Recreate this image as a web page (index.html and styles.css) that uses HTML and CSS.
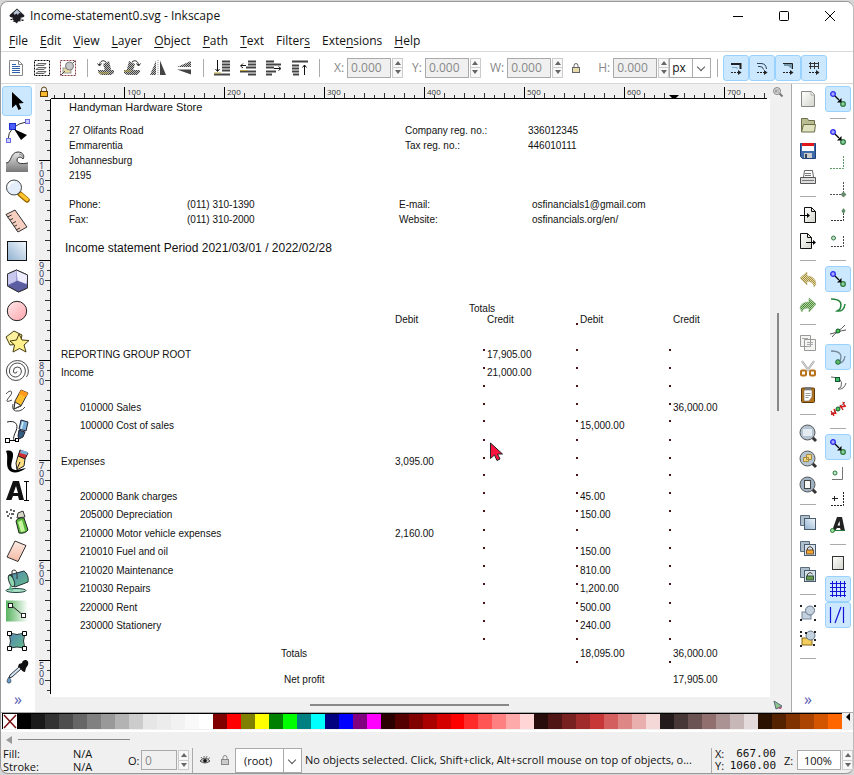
FILE: index.html
```html
<!DOCTYPE html>
<html lang="en">
<head>
<meta charset="utf-8">
<title>Income-statement0.svg - Inkscape</title>
<meta name="viewport" content="width=device-width, initial-scale=1">
<link rel="stylesheet" href="styles.css">
</head>
<body>
<svg class="defs" aria-hidden="true">
  <defs>
    <linearGradient id="gBlue" x1="0" y1="1" x2="1" y2="0"><stop offset="0" stop-color="#8fb0d0"/><stop offset="1" stop-color="#f4f9fd"/></linearGradient>
    <linearGradient id="gPink" x1="0" y1="0" x2="1" y2="1"><stop offset="0" stop-color="#ffe9ea"/><stop offset="1" stop-color="#ffa4ac"/></linearGradient>
    <linearGradient id="gGreen" x1="0" y1="0" x2="1" y2="0"><stop offset="0" stop-color="#58b35f"/><stop offset="1" stop-color="#ffffff"/></linearGradient>
    <linearGradient id="gMesh" x1="0" y1="0" x2="1" y2="1"><stop offset="0" stop-color="#5585b5"/><stop offset="1" stop-color="#63bd88"/></linearGradient>
    <linearGradient id="gPaper" x1="0" y1="0" x2="1" y2="1"><stop offset="0" stop-color="#ffffff"/><stop offset="1" stop-color="#d4d4cc"/></linearGradient>
    <linearGradient id="gGrey" x1="0" y1="0" x2="0" y2="1"><stop offset="0" stop-color="#e8e8e8"/><stop offset="1" stop-color="#777"/></linearGradient>
    <linearGradient id="gEraser" x1="0" y1="0" x2="0" y2="1"><stop offset="0" stop-color="#fdebe4"/><stop offset="1" stop-color="#f4b9a4"/></linearGradient>
    <pattern id="pDots" width="2" height="2" patternUnits="userSpaceOnUse"><rect width="2" height="2" fill="#bbb"/><path d="M0 0h1v1H0zM1 1h1v1H1z" fill="#444"/></pattern>
    <pattern id="pGold" width="2" height="2" patternUnits="userSpaceOnUse"><rect width="2" height="2" fill="#e8dca4"/><path d="M0 0h1v1H0zM1 1h1v1H1z" fill="#a08c40"/></pattern>
    <pattern id="pGreen" width="2" height="2" patternUnits="userSpaceOnUse"><rect width="2" height="2" fill="#b4d69c"/><path d="M0 0h1v1H0zM1 1h1v1H1z" fill="#4c8a42"/></pattern>
  </defs>

  <symbol id="i-logo" viewBox="0 0 16 16"><path d="M8 0.500l7 6.500c1 1 0 2-1 2.300l-3 .7 2 1-2 .7 1 1.500-3 .3-1 2-2-1.500-2.500-.8 1.500-1-2.500-1.200 2-1L1.500 9C.5 8.600 0 7.700 1 6.800z" fill="#1c1c22"/><path d="M8 1.500l4 4-2-.5-1 2-1.500-1.500L5.500 7 5 5.200 4 5.500z" fill="#b9c6d6"/><path d="M12.500 11.500h2v1.500h-2zM1.500 11h1.500v1H1.500z" fill="#1c1c22"/></symbol>

  <symbol id="i-doclines" viewBox="0 0 24 24"><path d="M5.500 4.500h9l4 4v11h-13z" fill="#fff" stroke="#888"/><path d="M14.500 4.500v4h4" fill="none" stroke="#888"/><path d="M8 8.500h4M8 10.500h8M8 12.500h8M8 14.500h8M8 16.500h8" stroke="#2f62ad"/></symbol>
  <symbol id="i-selall" viewBox="0 0 24 24"><rect x="4.500" y="4.500" width="15" height="15" fill="none" stroke="#000" stroke-dasharray="2 1"/><path d="M8 7.500h8l-2 2H6zM8 11.500h8l-2 2H6zM8 15.500h8l-2 2H6z" fill="#ddd" stroke="#666"/></symbol>
  <symbol id="i-desel" viewBox="0 0 24 24"><rect x="4.500" y="4.500" width="15" height="15" fill="none" stroke="#8c3a44" stroke-dasharray="2 1"/><rect x="7" y="12" width="8" height="5" fill="#e8dca4" stroke="#999"/><circle cx="13.500" cy="10" r="4" fill="#c8c8c8" stroke="#777"/><path d="M5 19l4-4M17 7l2-2" stroke="#555"/></symbol>
  <symbol id="i-rotl" viewBox="0 0 24 24"><path d="M9 8l6-3 3 12-6 1z" fill="url(#pDots)"/><path d="M4 14h16v3l-3 2H7l-3-3z" fill="url(#pDots)"/><path d="M5 17h10" stroke="#b9a53d"/><path d="M12 6C9 3.500 6 5 5.500 9M3.500 7.500l2 2.500 2-2.500" fill="none" stroke="#222"/></symbol>
  <symbol id="i-rotr" viewBox="0 0 24 24"><path d="M15 8L9 5 6 17l6 1z" fill="url(#pDots)"/><path d="M4 14h16v2l-3 3H7l-3-2z" fill="url(#pDots)"/><path d="M4 15h7" stroke="#b9a53d"/><path d="M12 6c3-2.500 6-1 6.500 3M16.500 7.500l2 2.500 2-2.500" fill="none" stroke="#222"/></symbol>
  <symbol id="i-fliph" viewBox="0 0 24 24"><path d="M10 4.500V19H4z" fill="url(#pDots)"/><path d="M14 4.500V19h6z" fill="#444" /><path d="M12 4v16" stroke="#999" stroke-dasharray="1 1"/></symbol>
  <symbol id="i-flipv" viewBox="0 0 24 24"><path d="M19 5v6H5z" fill="url(#pDots)"/><path d="M19 18.500v-5H5z" fill="#444"/></symbol>
  <symbol id="i-bottom" viewBox="0 0 24 24"><path d="M12 5.500h8M12 8.500h8M12 11.500h8M12 14.500h8M4 18.500h16" stroke="#444" stroke-width="2"/><path d="M4 17h7" stroke="#b9a53d"/><path d="M7.500 4v11M5.500 13l2 2.500 2-2.500" fill="none" stroke="#111"/></symbol>
  <symbol id="i-lower" viewBox="0 0 24 24"><path d="M12 5.500h8M12 8.500h8M10 11.500h10M4 15.500h16M12 18.500h8" stroke="#444" stroke-width="2"/><path d="M4 14.500h7" stroke="#b9a53d"/><path d="M10 9.500H5M7 7.500L4.500 10 7 12" fill="none" stroke="#111"/></symbol>
  <symbol id="i-raise" viewBox="0 0 24 24"><path d="M4 5.500h8M4 8.500h15M4 11.500h8M4 15.500h10M4 18.500h6" stroke="#444" stroke-width="2"/><path d="M12 12.500h6M16.500 10.500l2.500 2-2.500 2" fill="none" stroke="#111"/></symbol>
  <symbol id="i-top" viewBox="0 0 24 24"><path d="M4 5.500h16M4 9.500h7M4 12.500h7M4 15.500h7M5 18.500h6" stroke="#444" stroke-width="2"/><path d="M16.500 19V9M14.500 11.500l2-2.500 2 2.500" fill="none" stroke="#111"/></symbol>
  <symbol id="i-lock" viewBox="0 0 12 12"><path d="M4 5V3.500a2 2 0 0 1 4 0V5" fill="none" stroke="#666"/><rect x="2.500" y="5.500" width="7" height="5" fill="#e6dcae" stroke="#666"/></symbol>
  <symbol id="i-lockc" viewBox="0 0 12 12"><path d="M3.500 6V3.500a2.500 2.500 0 0 1 5 0V6" fill="none" stroke="#5a4410"/><rect x="2.500" y="5.500" width="7" height="5" fill="#f5b92e" stroke="#5a3c0a"/></symbol>
  <symbol id="i-lockg" viewBox="0 0 12 12"><path d="M4 6V3.500a2 2 0 0 1 4 0V5" fill="none" stroke="#888"/><rect x="2.500" y="5.500" width="7" height="5" fill="#ccc" stroke="#888"/></symbol>
  <symbol id="i-eye" viewBox="0 0 12 12"><path d="M1 7q5-6 10 0-5 4-10 0z" fill="#bbb" stroke="#555"/><path d="M2 3l1 1.500M5 2v1.500M8 2l-.5 1.500M10.500 3.500L9.500 5" stroke="#666"/><circle cx="6" cy="6.800" r="1.800" fill="#111"/></symbol>
  <symbol id="i-t1" viewBox="0 0 24 24"><path d="M7 8h9.500v5" fill="none" stroke="#222" stroke-width="2"/><path d="M8 11.500h5V13" fill="none" stroke="#8ab"/><path d="M7 16.500h7" stroke="#222" stroke-dasharray="2 1"/><path d="M14 14l3.500 2.500L14 19z" fill="#222"/></symbol>
  <symbol id="i-t2" viewBox="0 0 24 24"><path d="M7 7.500h4q5 0 5.500 5.500M8 10.500h2q3 0 3.500 3" fill="none" stroke="#345"/><path d="M7 16.500h7" stroke="#222" stroke-dasharray="2 1"/><path d="M14 14l3.500 2.500L14 19z" fill="#222"/></symbol>
  <symbol id="i-t3" viewBox="0 0 24 24"><path d="M7 7.500h9.500V13" fill="none" stroke="#222"/><path d="M8 8h8v5l-4-3H8z" fill="#79a"/><path d="M7 16.500h7" stroke="#222" stroke-dasharray="2 1"/><path d="M14 14l3.500 2.500L14 19z" fill="#222"/></symbol>
  <symbol id="i-t4" viewBox="0 0 24 24"><path d="M7 7.500h10M7 10.500h10M8.500 6v7M12.500 6v7M16.500 6v7" stroke="#333"/><path d="M7 16.500h7" stroke="#222" stroke-dasharray="2 1"/><path d="M14 14l3.500 2.500L14 19z" fill="#222"/></symbol>

  <symbol id="i-select" viewBox="0 0 26 26"><path d="M8 4v16l4-3.500 2.500 5.500 2.800-1.300-2.500-5.200 5-.5z" fill="#000"/></symbol>
  <symbol id="i-node" viewBox="0 0 26 26"><path d="M4 22Q4 7 24 3.500" fill="none" stroke="#333"/><rect x="5.500" y="5.500" width="6" height="6" fill="#4c5dfc" stroke="#1c2ed0"/><rect x="2.500" y="20.500" width="4" height="4" fill="#c9cdfc" stroke="#6a6ce0"/><rect x="21.500" y="1.500" width="4" height="4" fill="#c9cdfc" stroke="#6a6ce0"/><path d="M10 11l13 6-6 5z" fill="#000"/></symbol>
  <symbol id="i-tweak" viewBox="0 0 26 26"><path d="M2 15c6 0 4-11 12-11 5 0 7 4 5 7-2-3-6-2-6 1 0 4 5 4 11 3v9H2z" fill="url(#gGrey)"/><path d="M2 15c6 0 4-11 12-11 5 0 7 4 5 7-2-3-6-2-6 1 0 4 5 4 11 3" fill="none" stroke="#333"/><path d="M15 6q3 0 4 3" fill="none" stroke="#888"/></symbol>
  <symbol id="i-zoom" viewBox="0 0 26 26"><path d="M16 16l7 6" stroke="#9b6a00" stroke-width="5.500" stroke-linecap="round"/><path d="M17 16.500l6 5" stroke="#ffc42e" stroke-width="3.500" stroke-linecap="round"/><circle cx="10" cy="9.500" r="7.500" fill="#e3eefa" stroke="#444"/><path d="M4.500 9a5.500 5.500 0 0 1 6-5" stroke="#fff" stroke-width="2" fill="none"/></symbol>
  <symbol id="i-measure" viewBox="0 0 26 26"><path d="M2 6.500L11 2l12 17-9 5z" fill="#f6cfc0" stroke="#333"/><path d="M3.500 9l4-2M6 12l3-1.500M8 15.500l4-2M10 18.500l3-1.500M12 22l4-2" stroke="#333"/></symbol>
  <symbol id="i-rect" viewBox="0 0 26 26"><rect x="3.500" y="3.500" width="19" height="19" fill="url(#gBlue)" stroke="#111"/></symbol>
  <symbol id="i-box" viewBox="0 0 26 26"><path d="M12.500 2l11 5v13l-9 4-11-6V6z" fill="#7272b8" stroke="#333"/><path d="M12.500 2l11 5-1 9-9-3.500z" fill="#eeeeff"/><path d="M12.500 2v11l-9 4V6z" fill="#c8c8ee"/><path d="M13 13l10 4v3l-8.500 4-10.500-6z" fill="#5c5ca0"/><path d="M12.500 2l11 5v13l-9 4-11-6V6z" fill="none" stroke="#333"/></symbol>
  <symbol id="i-circle" viewBox="0 0 26 26"><circle cx="13" cy="13" r="9.700" fill="url(#gPink)" stroke="#222"/></symbol>
  <symbol id="i-star" viewBox="0 0 26 26"><path d="M2 9l8-6 8 4-2 9-10 1z" fill="#fdf1a0" stroke="#443c10"/><path d="M15 6l3 6 7 .5-5 4.500 2 7-6.500-3.500L9 24l1.500-7-4.500-4 6.500-1z" fill="#fff08a" stroke="#443c10"/></symbol>
  <symbol id="i-spiral" viewBox="0 0 26 26"><path d="M13 13.500a1.800 1.800 0 0 1-3.600-.5a4 4 0 0 1 8 0a6 6 0 0 1-12 0a8 8 0 0 1 16 0a9.500 9.500 0 0 1-19 0a11 10.500 0 0 1 22 0q0 4-2 6" fill="none" stroke="#333" stroke-width=".9"/></symbol>
  <symbol id="i-pencil" viewBox="0 0 26 26"><path d="M2 6C6 1 10 3 6 8s-5 7 2 4M9 16q-2 8 6 7 4-1 6-4" fill="none" stroke="#444"/><path d="M17 2l7 3-7 13-7 3 1-8z" fill="#ffc030" stroke="#333"/><path d="M17 2l7 3-2 4-7-3z" fill="#ff9a1a"/><path d="M11 14l6 3.500-7 3.500z" fill="#fff" stroke="#333"/></symbol>
  <symbol id="i-pen" viewBox="0 0 26 26"><path d="M3 4c8-2 12 2 9 9-2 4-3 7-2 9" fill="none" stroke="#222"/><rect x="1.500" y="20.500" width="4" height="4" fill="#fff" stroke="#000"/><path d="M6 22.500h5" stroke="#000"/><rect x="11.500" y="20.500" width="3" height="3" fill="#fff" stroke="#000"/><path d="M17 2l7 2-2 9-7-2z" fill="#7aaed8" stroke="#223"/><path d="M15 12l6 2-2 5-4 2-1-3z" fill="#345a80" stroke="#223"/><path d="M19 4l-2 7" stroke="#d8ebfa" stroke-width="1.500"/></symbol>
  <symbol id="i-callig" viewBox="0 0 26 26"><path d="M2 3c8-2 8 4 6 10-2 7 0 9 5 9l9-2c-6 5-14 6-17 2-4-5 0-13-3-19z" fill="#000"/><path d="M16 2l8 3-3 6-7-3z" fill="#d02c2c" stroke="#222"/><path d="M17 2l7 2-1 3-7-2z" fill="#7aaed8"/><path d="M14 8l7 3-1 7-7 4-1-7z" fill="#ffdd80" stroke="#222"/><path d="M13 21l3-7" stroke="#222"/></symbol>
  <symbol id="i-text" viewBox="0 0 26 26"><path d="M9 3h6l5 19h-5l-1-4H9l-1.500 4H2zM12 8l-2.500 7H14z" fill="#111" fill-rule="evenodd"/><path d="M20 3.500h5M20 22.500h5M22.500 3v19" stroke="#000"/></symbol>
  <symbol id="i-spray" viewBox="0 0 26 26"><path d="M12 13q2-4 8-3l4 12q-3 4-9 3z" fill="#56b53a" stroke="#222"/><path d="M14 14l4-2 3 11-4 1z" fill="#c8f5a0"/><path d="M13 10l1-5 5-2 2 6z" fill="#d8d8c8" stroke="#333"/><path d="M2 4h2M6 2h2M3 8h2M7 6h3M6 10h2M5 6h1M9 3h2" stroke="#333" stroke-width="1.500"/></symbol>
  <symbol id="i-eraser" viewBox="0 0 26 26"><path d="M11 3l11 4.500-8 16L3 19z" fill="url(#gEraser)" stroke="#333"/></symbol>
  <symbol id="i-bucket" viewBox="0 0 26 26"><ellipse cx="12" cy="22.500" rx="10" ry="2" fill="#a6e0c4" stroke="#244"/><path d="M5 7l15-4c3 2 5 7 4 11l-13 5c-4-2-7-8-6-12z" fill="url(#gMesh)" stroke="#233"/><ellipse cx="7.500" cy="13" rx="2.500" ry="6" transform="rotate(-20 7.500 13)" fill="#8fd6b0" stroke="#233"/><path d="M7 18q-2 3 2 4" fill="none" stroke="#5bb58a" stroke-width="2"/><path d="M8 9V3q4-3 5 3v5" fill="none" stroke="#333"/></symbol>
  <symbol id="i-grad" viewBox="0 0 26 26"><rect x="2" y="2.500" width="22" height="21" fill="url(#gGreen)"/><path d="M7 7l13 11" stroke="#222"/><rect x="4.500" y="5.500" width="4" height="4" fill="#fff" stroke="#222"/><rect x="17.500" y="15.500" width="4" height="4" fill="#fff" stroke="#222"/></symbol>
  <symbol id="i-mesh" viewBox="0 0 26 26"><path d="M5 5q8 3 16 0-3 8 0 16-8-4-16 0 3-8 0-16z" fill="url(#gMesh)" stroke="#233"/><path d="M3.500 3.500h4v4h-4zM18.500 3.500h4v4h-4zM3.500 18.500h4v4h-4zM18.500 18.500h4v4h-4z" fill="#fff" stroke="#000"/></symbol>
  <symbol id="i-drop" viewBox="0 0 26 26"><path d="M15 6l3-1c1-5 8-3 6 2l-2 3-1 4-2-.5-5-5z" fill="#111"/><path d="M15 9L6 17l-1 3 3-1 9-8z" fill="#cfe2f5" stroke="#333"/><path d="M5 19c3 4 2 6 0 6s-3-2 0-6z" fill="#6a9cc8" stroke="#234" stroke-width=".7"/></symbol>

  <symbol id="i-new" viewBox="0 0 24 24"><path d="M5.500 4.500h10l3 3v12h-13z" fill="url(#gPaper)" stroke="#888"/><path d="M15 4.500v3.500h3.500" fill="#fff" stroke="#aaa"/></symbol>
  <symbol id="i-open" viewBox="0 0 24 24"><path d="M5.500 18.500v-13h6l1 2h6v11z" fill="#b9bd91" stroke="#6b6f48"/><path d="M7.500 11.500h12l-1 7.500h-13z" fill="#dfe3bf" stroke="#6b6f48"/></symbol>
  <symbol id="i-save" viewBox="0 0 24 24"><path d="M4.500 4.500h15v15h-13l-2-2z" fill="#3e6cab" stroke="#20407a"/><rect x="6" y="4" width="12" height="3" fill="#e01818"/><rect x="6" y="7" width="12" height="5" fill="#fff"/><rect x="8" y="14" width="8" height="5" fill="#ccc"/><rect x="9" y="15" width="2" height="4" fill="#345"/></symbol>
  <symbol id="i-print" viewBox="0 0 24 24"><path d="M8.500 5.500h8l1 7h-10z" fill="#fff" stroke="#666"/><path d="M4.500 12.500h15v6h-15z" fill="#ddd" stroke="#555"/><path d="M6 15.500h12M9 8.500h6M9 10.500h6" stroke="#777"/></symbol>
  <symbol id="i-import" viewBox="0 0 24 24"><path d="M8.500 4.500h7l4 4v11h-11z" fill="url(#gPaper)" stroke="#111"/><path d="M15.500 4.500v4h4" fill="none" stroke="#111"/><path d="M4 12.500h8" stroke="#000"/><path d="M11 10l3 2.500-3 2.500z"/></symbol>
  <symbol id="i-export" viewBox="0 0 24 24"><path d="M4.500 4.500h7l4 4v11h-11z" fill="url(#gPaper)" stroke="#111"/><path d="M11.500 4.500v4h4" fill="none" stroke="#111"/><path d="M10 13.500h8" stroke="#000"/><path d="M17 11l3 2.500-3 2.500z"/></symbol>
  <symbol id="i-undo" viewBox="0 0 24 24"><path d="M4 11l7-6v4q8 0 9 8l-2 3q0-5-7-6v4z" fill="url(#pGold)" stroke="#b5a565" stroke-width=".5"/></symbol>
  <symbol id="i-redo" viewBox="0 0 24 24"><path d="M20 11l-7-6v4q-8 0-9 6l2 4q0-4 7-4v4z" fill="url(#pGreen)" stroke="#6ba05e" stroke-width=".5"/></symbol>
  <symbol id="i-copy" viewBox="0 0 24 24"><path d="M4.500 4.500h10v11h-10zM8.500 8.500h11v11h-11z" fill="#f4f4f0" stroke="#999"/><path d="M11 11.500h6M11 13.500h6M11 15.500h4M6 7.500h6" stroke="#aaa"/></symbol>
  <symbol id="i-cut" viewBox="0 0 24 24"><path d="M6 4l7 10M18 4l-7 10" stroke="#999" stroke-width="2"/><path d="M6 4l7 10M18 4l-7 10" stroke="#eee" stroke-width=".8"/><rect x="5" y="13.500" width="5" height="5" rx="1" fill="#fff" stroke="#b8721a" stroke-width="2"/><rect x="14" y="13.500" width="5" height="5" rx="1" fill="#fff" stroke="#b8721a" stroke-width="2"/></symbol>
  <symbol id="i-paste" viewBox="0 0 24 24"><rect x="5.500" y="5" width="13" height="14.500" rx="1" fill="#b8741a" stroke="#5c3a08"/><path d="M8 7h8v7l-3 4H8z" fill="#fff" stroke="#666" stroke-width=".6"/><rect x="9" y="4" width="6" height="3" fill="#777"/><path d="M9.500 10.500h5M9.500 12.500h5M9.500 14.500h3" stroke="#999"/></symbol>
  <symbol id="i-zsel" viewBox="0 0 24 24"><path d="M16 16l4 4" stroke="#333" stroke-width="3"/><circle cx="11.500" cy="11.500" r="7.500" fill="#b4c4d2" stroke="#555"/><rect x="7.500" y="8.500" width="8" height="6" fill="#e4ecf2" stroke="#fff" stroke-dasharray="1 1"/></symbol>
  <symbol id="i-zdraw" viewBox="0 0 24 24"><path d="M16 16l4 4" stroke="#333" stroke-width="3"/><circle cx="11.500" cy="11.500" r="7.500" fill="#b4c4d2" stroke="#555"/><path d="M10.500 7.500h5v5h-5zM7.500 10.500h5v4h-5z" fill="#f4d884" stroke="#a68a3a"/></symbol>
  <symbol id="i-zpage" viewBox="0 0 24 24"><path d="M16 16l4 4" stroke="#333" stroke-width="3"/><circle cx="11.500" cy="11.500" r="7.500" fill="#9fb2c4" stroke="#555"/><rect x="8.500" y="7.500" width="6" height="8" fill="#f6f6f6" stroke="#444"/></symbol>
  <symbol id="i-dup" viewBox="0 0 24 24"><path d="M4.500 4.500h9v10h-9z" fill="#aebfce" stroke="#5a6c7c"/><rect x="8.500" y="7.500" width="11" height="11" fill="url(#gBlue)" stroke="#4a5c6c"/></symbol>
  <symbol id="i-clone" viewBox="0 0 24 24"><path d="M4.500 4.500h9v10h-9z" fill="#aebfce" stroke="#5a6c7c"/><rect x="8.500" y="7.500" width="11" height="11" fill="#d4e2ee" stroke="#4a5c6c"/><path d="M11.500 13v-2q2.500-3 5 0v2" fill="none" stroke="#543"/><rect x="10.500" y="13" width="7" height="4" fill="#f5a623" stroke="#754"/></symbol>
  <symbol id="i-unlink" viewBox="0 0 24 24"><path d="M4.500 4.500h9v10h-9z" fill="#aebfce" stroke="#5a6c7c"/><rect x="8.500" y="7.500" width="11" height="11" fill="#d4e2ee" stroke="#4a5c6c"/><path d="M11.500 13v-2q2.500-3 5 0" fill="none" stroke="#543"/><rect x="10.500" y="13" width="7" height="4" fill="#6d9c48" stroke="#354"/></symbol>
  <symbol id="i-group" viewBox="0 0 24 24"><rect x="6" y="11" width="9" height="7" fill="#c4d2e0" stroke="#789"/><circle cx="14" cy="9.500" r="4.500" fill="#c4d2e0" stroke="#678"/><path d="M4 4h2v2H4zM18 4h2v2h-2zM4 18h2v2H4zM18 18h2v2h-2z" fill="#222"/></symbol>
  <symbol id="i-ungroup" viewBox="0 0 24 24"><rect x="6" y="11" width="10" height="7" fill="#f2cc5c" stroke="#8a6a14"/><circle cx="14.500" cy="8.500" r="4.500" fill="#c4d2e0" stroke="#678"/><path d="M4 4h2v2H4zM9 5h2v2H9zM18 4h2v2h-2zM4 8h2v2H4zM4 18h2v2H4zM17 17h2v2h-2zM18 12h2v2h-2z" fill="#222"/></symbol>

  <symbol id="i-snap" viewBox="0 0 24 24"><circle cx="7" cy="7" r="2.300" fill="#a9a9ff" stroke="#2a2aee" stroke-width="1.300"/><circle cx="17" cy="17" r="2.300" fill="#8fcf9f" stroke="#2a7a3a" stroke-width="1.300"/><path d="M9 9l4 4" stroke="#000" stroke-width="1.200"/><path d="M15.500 11v4.500H11z"/></symbol>
  <symbol id="i-s1" viewBox="0 0 24 24"><path d="M4 17.500h13.500V4" fill="none" stroke="#5b9a66" stroke-dasharray="2 1"/></symbol>
  <symbol id="i-s2" viewBox="0 0 24 24"><path d="M4 17.500h13.500V4" fill="none" stroke="#555" stroke-dasharray="2 1"/><path d="M17.500 14.500l3 3-3 3-3-3z" fill="#6a8a70"/></symbol>
  <symbol id="i-s3" viewBox="0 0 24 24"><path d="M5 17.500h12.500V9" fill="none" stroke="#333" stroke-dasharray="2 1"/><path d="M17.500 5l2 3-2 3-2-3z" fill="#5a8a64"/></symbol>
  <symbol id="i-s4" viewBox="0 0 24 24"><path d="M5 17.500h12.500V6" fill="none" stroke="#444" stroke-dasharray="2 1"/><circle cx="7.500" cy="9" r="2" fill="#b8dcc0" stroke="#3a7a4a"/></symbol>
  <symbol id="i-path" viewBox="0 0 24 24"><path d="M5 6q13 0 9 10l-3 2q7 1 8-7" fill="none" stroke="#23823a" stroke-width="1.500"/></symbol>
  <symbol id="i-inter" viewBox="0 0 24 24"><path d="M4 15q8-1 15-9M6 18q4-6 14-7" fill="none" stroke="#555"/><circle cx="12" cy="12" r="2" fill="#4c4" stroke="#153"/></symbol>
  <symbol id="i-cusp" viewBox="0 0 24 24"><path d="M5 6q13 0 9 10l-3 2q7 1 8-7" fill="none" stroke="#789" stroke-width="1.300"/><circle cx="12" cy="17" r="2.300" fill="#6b6" stroke="#164"/></symbol>
  <symbol id="i-smooth" viewBox="0 0 24 24"><path d="M5 6q13 0 10 10l-3 2q6 1 8-6" fill="none" stroke="#666"/><rect x="9.500" y="6.500" width="4" height="4" fill="#4b6" stroke="#153"/></symbol>
  <symbol id="i-mid" viewBox="0 0 24 24"><path d="M5 18L19 5" stroke="#666"/><path d="M5 14l3 5M8 12l2 5M5 17l5-1M14 8l3 5M17 5l2 5M14 10l6-1" stroke="#d01818" stroke-width="1.400"/><circle cx="12" cy="12" r="2" fill="#5c5" stroke="#153"/></symbol>
  <symbol id="i-s5" viewBox="0 0 24 24"><path d="M6 18.500h10.500V6" fill="none" stroke="#777"/><circle cx="9" cy="12" r="2" fill="#bfe8c8" stroke="#2a7a3a"/></symbol>
  <symbol id="i-s6" viewBox="0 0 24 24"><path d="M5 18.500h12.500V5" fill="none" stroke="#222" stroke-dasharray="2 1"/><path d="M6 11.500h6M8.500 9v5" stroke="#222"/></symbol>
  <symbol id="i-s7" viewBox="0 0 24 24"><path d="M11 4h5l3 14h-4l-1-3h-3l-2 3H6zM13.500 8l-2 4.500H14z" fill="#222" fill-rule="evenodd"/><circle cx="6.500" cy="17.500" r="2" fill="#9d9" stroke="#2a7a3a"/><path d="M8 17.500h11" stroke="#2a7a3a"/></symbol>
  <symbol id="i-s8" viewBox="0 0 24 24"><rect x="6.500" y="5.500" width="11" height="13" fill="url(#gPaper)" stroke="#333"/></symbol>
  <symbol id="i-grid" viewBox="0 0 24 24"><path d="M6.500 4v16M10.500 4v16M14.500 4v16M18.500 4v16M4 6.500h16M4 10.500h16M4 14.500h16M4 18.500h16" stroke="#1414d8"/></symbol>
  <symbol id="i-guide" viewBox="0 0 24 24"><path d="M4.500 4v16M17.500 4v16M9 20l6-16" stroke="#1414d8" stroke-width="1.200"/></symbol>
</svg>

<div class="window">
  <header class="titlebar">
    <svg class="logo"><use href="#i-logo"/></svg>
    <h1>Income-statement0.svg - Inkscape</h1>
    <div class="winbtns">
      <button aria-label="Minimize"><svg viewBox="0 0 12 12"><path d="M1 6.500h10" /></svg></button>
      <button aria-label="Maximize"><svg viewBox="0 0 12 12"><rect x="1.500" y="1.500" width="9" height="9" rx="1"/></svg></button>
      <button aria-label="Close"><svg viewBox="0 0 12 12"><path d="M1 1l10 10M11 1L1 11"/></svg></button>
    </div>
  </header>
  <nav class="menubar">
    <button><u>F</u>ile</button><button><u>E</u>dit</button><button><u>V</u>iew</button><button><u>L</u>ayer</button><button><u>O</u>bject</button><button><u>P</u>ath</button><button><u>T</u>ext</button><button>Filter<u>s</u></button><button>Exte<u>n</u>sions</button><button><u>H</u>elp</button>
  </nav>

  <div class="toolbar">
    <div class="icons" data-icons="doclines selall desel | rotl rotr fliph flipv | bottom lower raise top |"></div>
    <div class="fields">
      <label for="fx">X:</label><span class="spin"><input id="fx" value="0.000"><span class="steps"><button aria-label="X up"></button><button aria-label="X down"></button></span></span>
      <label for="fy">Y:</label><span class="spin"><input id="fy" value="0.000"><span class="steps"><button aria-label="Y up"></button><button aria-label="Y down"></button></span></span>
      <label for="fw">W:</label><span class="spin"><input id="fw" value="0.000"><span class="steps"><button aria-label="W up"></button><button aria-label="W down"></button></span></span>
      <button class="lock" aria-label="Lock ratio"><svg><use href="#i-lock"/></svg></button>
      <label for="fh">H:</label><span class="spin"><input id="fh" value="0.000"><span class="steps"><button aria-label="H up"></button><button aria-label="H down"></button></span></span>
      <span class="pick"><select aria-label="Unit"><option>px</option></select></span>
    </div>
    <div class="icons" data-icons="| *t1 *t2 *t3 *t4"></div>
  </div>

  <main class="main">
    <div class="toolbox">
      <div class="icons col big" data-icons="*select node tweak zoom measure rect box circle star spiral pencil pen callig text spray eraser bucket grad mesh drop"></div>
      <button class="more" aria-label="More tools">»</button>
    </div>
    <div class="canvas">
      <button class="corner" aria-label="Lock guides"><svg><use href="#i-lockc"/></svg></button>
      <div class="hruler"><span>100</span><span>200</span><span>300</span><span>400</span><span>500</span><span class="here">600</span><span>700</span></div>
      <div class="zoomcorner"><svg viewBox="0 0 12 12"><path d="M7.500 7.500l3 3" stroke="#777" stroke-width="2"/><circle cx="5" cy="5" r="3.500" fill="#ddd" stroke="#888"/><path d="M4 3.500v3M6 3.500v1M6 5.500v1" stroke="#666"/></svg></div>
      <div class="vruler"><span>1000</span><span>900</span><span>800</span><span>700</span><span>600</span><span>500</span></div>
      <article class="page">
        <h2>Handyman Hardware Store</h2>
        <div class="address">
          <p>27 Olifants Road<br>Emmarentia<br>Johannesburg<br>2195</p>
          <dl><dt>Company reg. no.:</dt><dd>336012345</dd><dt>Tax reg. no.:</dt><dd>446010111</dd></dl>
        </div>
        <dl class="contact"><dt>Phone:</dt><dd>(011) 310-1390</dd><dt>E-mail:</dt><dd>osfinancials1@gmail.com</dd><dt>Fax:</dt><dd>(011) 310-2000</dd><dt>Website:</dt><dd>osfinancials.org/en/</dd></dl>
        <h3>Income statement Period 2021/03/01 / 2022/02/28</h3>
        <table>
          <colgroup><col class="name"><col class="first"><col><col><col></colgroup>
          <thead>
            <tr><th></th><th></th><th class="totals"><span>Totals</span></th><th></th><th></th></tr>
            <tr><th></th><th>Debit</th><th>Credit</th><th>Debit</th><th>Credit</th></tr>
          </thead>
          <tbody>
            <tr class="gap wide"><td colspan="5"></td></tr>
            <tr class="head"><td>REPORTING GROUP ROOT</td><td></td><td>17,905.00</td><td></td><td></td></tr>
            <tr class="head"><td>Income</td><td></td><td>21,000.00</td><td></td><td></td></tr>
            <tr class="gap"><td colspan="5"></td></tr>
            <tr><td>010000 Sales</td><td></td><td></td><td></td><td>36,000.00</td></tr>
            <tr class="tall"><td>100000 Cost of sales</td><td></td><td></td><td>15,000.00</td><td></td></tr>
            <tr class="gap"><td colspan="5"></td></tr>
            <tr class="head"><td>Expenses</td><td>3,095.00</td><td></td><td></td><td></td></tr>
            <tr class="gap"><td colspan="5"></td></tr>
            <tr><td>200000 Bank charges</td><td></td><td></td><td>45.00</td><td></td></tr>
            <tr class="tall"><td>205000 Depreciation</td><td></td><td></td><td>150.00</td><td></td></tr>
            <tr><td>210000 Motor vehicle expenses</td><td>2,160.00</td><td></td><td></td><td></td></tr>
            <tr class="tall"><td>210010 Fuel and oil</td><td></td><td></td><td>150.00</td><td></td></tr>
            <tr><td>210020 Maintenance</td><td></td><td></td><td>810.00</td><td></td></tr>
            <tr class="tall"><td>210030 Repairs</td><td></td><td></td><td>1,200.00</td><td></td></tr>
            <tr><td>220000 Rent</td><td></td><td></td><td>500.00</td><td></td></tr>
            <tr class="tall"><td>230000 Stationery</td><td></td><td></td><td>240.00</td><td></td></tr>
            <tr class="gap thin"><td colspan="5"></td></tr>
          </tbody>
          <tfoot>
            <tr><td>Totals</td><td></td><td></td><td>18,095.00</td><td>36,000.00</td></tr>
            <tr><td>Net profit</td><td></td><td></td><td></td><td>17,905.00</td></tr>
          </tfoot>
        </table>
        <svg class="dots" aria-hidden="true"></svg>
        <svg class="pointer" viewBox="0 0 14 20"><path d="M1.500 1v15.500l4-3.500 2.500 5.500 3-1.500-2.500-5h5z" fill="#fb1440" stroke="#222" stroke-width="1"/></svg>
      </article>
      <div class="vscroll"><i></i></div>
      <div class="hscroll"><i></i></div>
      <div class="cms"><svg viewBox="0 0 12 12"><path d="M2 2l8 5-6 3z" fill="#8cc88c" stroke="#567"/><path d="M5 9l5-1-1 2z" fill="#a36"/></svg></div>
    </div>
    <div class="side">
      <div class="cmds"><div class="icons col" data-icons="new open save print | import export | undo redo | copy cut paste | zsel zdraw zpage | dup clone unlink | group ungroup |"></div><button class="more" aria-label="More commands">»</button></div>
      <div class="icons col" data-icons="*snap | snap s1 s2 s3 s4 | *snap path inter *cusp smooth mid | *snap s5 s6 s7 | s8 *grid *guide"></div>
    </div>
  </main>

  <div class="palette"><div class="swatches"></div><button aria-label="Palette menu"></button></div>
  <div class="palscroll"><i></i></div>
  <footer class="status">
    <dl class="style"><dt>Fill:</dt><dd>N/A</dd><dt>Stroke:</dt><dd>N/A</dd></dl>
    <label for="op">O:</label><span class="spin op"><input id="op" value="0"><span class="steps"><button aria-label="Opacity up"></button><button aria-label="Opacity down"></button></span></span>
    <div class="layer">
      <button aria-label="Toggle visibility"><svg><use href="#i-eye"/></svg></button>
      <button aria-label="Toggle lock"><svg><use href="#i-lockg"/></svg></button>
      <span class="pick"><select aria-label="Layer"><option>(root)</option></select></span>
    </div>
    <p class="msg">No objects selected. Click, Shift+click, Alt+scroll mouse on top of objects, o...</p>
    <dl class="coords"><dt>X:</dt><dd>667.00</dd><dt>Y:</dt><dd>1060.00</dd></dl>
    <label for="zm">Z:</label><span class="spin zm"><input id="zm" value="100%"><span class="steps"><button aria-label="Zoom in"></button><button aria-label="Zoom out"></button></span></span>
  </footer>
</div>
<script src="app.js"></script>
</body>
</html>
```
FILE: styles.css
```css
* { box-sizing: border-box; }
body { margin: 0; background: #d6d6d6; font: 12px/16px "Open Sans", "Noto Sans", sans-serif; color: #111; }
h1, h2, h3, p, dl, dd { margin: 0; font-weight: normal; }
button, input, select { font: inherit; color: inherit; margin: 0; padding: 0; border: 0; background: none; border-radius: 0; }
button { display: flex; align-items: center; justify-content: center; }
.defs { position: absolute; width: 0; height: 0; }

.window { display: flex; flex-direction: column; min-height: calc(100vh - 2px); margin: 1px 0 1px; border: 1px solid #999; border-right-color: #bbb; border-radius: 8px; background: #f0f0f0; overflow: hidden; }
.titlebar { display: flex; align-items: center; height: 28px; padding-left: 8px; background: #fff; }
.logo { width: 16px; height: 16px; margin-right: 5px; }
.titlebar h1 { flex: 1; font-size: 12px; }
.winbtns { display: flex; }
.winbtns button { width: 46px; height: 28px; }
.winbtns svg { width: 12px; height: 12px; fill: none; stroke: #000; }
.menubar { display: flex; gap: 12px; height: 22px; padding: 0 8px; background: #fff; border-bottom: 1px solid #d8d8d8; }
.menubar button { height: 22px; }
.menubar u { text-underline-offset: 2px; }

.toolbar { display: flex; align-items: center; height: 32px; padding-left: 2px; background: #fff; border-bottom: 1px solid #d8d8d8; }
.icons { display: flex; }
.icons.col { flex-direction: column; align-items: center; }
.icons button { width: 26px; height: 26px; border: 1px solid transparent; border-radius: 3px; }
.icons button.on { background: #cce8ff; border-color: #99d1ff; }
.icons svg { flex: none; width: 24px; height: 24px; }
.icons hr { width: 12px; height: 18px; margin: 4px 0; border: 0; background: linear-gradient(#aaa, #aaa) center / 1px 100% no-repeat; }
.icons.col hr { width: 16px; height: 12px; margin: 0; background-size: 100% 1px; }
.icons.big button { width: 30px; height: 30px; }
.icons.big svg { width: 26px; height: 26px; }

.fields { display: flex; align-items: center; color: #888; }
.fields label { padding: 0 3px 0 9px; }
.spin { display: flex; width: 56px; height: 20px; color: #888; }
.spin input { flex: 1; min-width: 0; padding: 0 3px; border: 1px solid #aaa; background: #f0f0f0; }
.steps { display: flex; flex-direction: column; width: 11px; margin-left: 1px; border: 1px solid #ccc; background: #f8f8f8; }
.steps button { flex: 1; width: 100%; }
.steps button::before { content: ""; border: 3px solid transparent; border-top: 0; border-bottom: 4px solid #666; }
.steps button + button { border-top: 1px solid #ccc; }
.steps button + button::before { border: 3px solid transparent; border-bottom: 0; border-top: 4px solid #666; }
.fields .lock { width: 26px; }
.lock svg, .corner svg, .layer svg { width: 12px; height: 12px; }
.pick { position: relative; display: flex; width: 42px; height: 20px; border: 1px solid #aaa; background: #fff; color: #111; }
.pick select { flex: 1; appearance: none; padding-left: 2px; }
.pick::after { content: ""; position: absolute; right: 0; top: 0; bottom: 0; width: 17px; border-left: 1px solid #aaa; pointer-events: none; }
.pick::before { content: ""; position: absolute; right: 6px; top: 5px; width: 5px; height: 5px; border: solid #555; border-width: 0 1px 1px 0; transform: rotate(45deg); }

.main { display: flex; flex: 1; border-bottom: 1px solid #aaa; }
.toolbox, .side { background: #fff; padding-top: 2px; }
.toolbox { display: flex; flex-direction: column; justify-content: space-between; width: 34px; }
.toolbox .icons { padding-right: 2px; }
.more { width: 100%; height: 26px; color: #5a5ab4; font-size: 16px; }
.side { display: flex; width: 62px; border-left: 1px solid #aaa; padding-left: 1px; }
.side .icons { width: 30px; }
.cmds { display: flex; flex-direction: column; justify-content: space-between; }

.canvas { flex: 1; min-width: 0; display: grid; grid-template: 15px 1fr 15px / 16px minmax(0, 1fr) 21px; }
.corner { padding-left: 1px; }
.hruler { display: flex; overflow: hidden; border-bottom: 1px solid #000; padding-left: 73px; margin-right: 3px; font-size: 8px; color: #333;
  background: repeating-linear-gradient(90deg, #333 0 1px, transparent 1px 20px) 13px 100% / 100% 5px no-repeat, repeating-linear-gradient(90deg, #333 0 1px, transparent 1px 20px) 3px 100% / 100% 3px no-repeat; }
.hruler span { flex: 0 0 100px; border-left: 1px solid #000; padding-left: 2px; margin-top: 3px; line-height: 9px; }
.hruler .here::after { content: ""; display: inline-block; margin-left: 28px; border: 5px solid transparent; border-bottom: 0; border-top-color: #000; vertical-align: -5px; }
.zoomcorner, .cms { display: flex; align-items: center; justify-content: flex-start; padding-left: 2px; }
.zoomcorner svg, .cms svg { width: 12px; height: 12px; }
.vruler { overflow: hidden; border-right: 1px solid #000; padding-top: 61px; margin-bottom: 3px; font-size: 9px; line-height: 8px; color: #335;
  background: repeating-linear-gradient(#333 0 1px, transparent 1px 20px) 100% 1px / 5px 100% no-repeat, repeating-linear-gradient(#333 0 1px, transparent 1px 20px) 100% 11px / 3px 100% no-repeat; }
.vruler span { display: block; height: 100px; margin-left: 4px; padding-right: 6px; border-top: 1px solid #000; padding-top: 1px; word-break: break-all; }
.vruler span:last-child { height: 30px; }

.page { position: relative; background: #fff; padding: 1px 10px 5px; overflow: hidden; font: 10px/15px "Liberation Sans", Arial, sans-serif; }
.page h2 { padding-left: 8px; font-size: 11px; line-height: 15px; }
.address { display: flex; padding: 8px 8px 14px; }
.address p { width: 336px; }
.address dl, .contact { display: grid; grid-template-columns: 123px 1fr; align-content: start; }
.contact { grid-template-columns: 118px 212px 133px 1fr; padding: 0 8px; }
.page h3 { padding: 13px 4px 46px; font-size: 12px; line-height: 17px; }
table { width: 705px; table-layout: fixed; border-collapse: collapse; }
col { width: 93px; }
col.first { width: 92px; }
col.name { width: 334px; }
th, td { padding: 0; font-weight: normal; text-align: left; height: 18px; line-height: 11px; white-space: nowrap; }
th { height: 11px; }
.totals span { margin-left: -18px; }
.tall td { height: 19px; }
.gap td { height: 17px; }
.wide td { height: 20px; }
.thin td { height: 5px; }
td:first-child { padding-left: 19px; }
.head td:first-child { padding-left: 0; }
tfoot td { height: 26px; }
tfoot td:first-child { padding-left: 220px; }
tfoot tr:last-child td:first-child { padding-left: 223px; }
.dots { position: absolute; left: 0; top: 0; width: 100%; height: 100%; pointer-events: none; }
.pointer { position: absolute; left: 438px; top: 343px; width: 14px; height: 20px; }
.vscroll { display: flex; justify-content: center; padding-right: 5px; }
.vscroll i { width: 2px; height: 98px; margin-top: 214px; background: #888; }
.hscroll { grid-column: 2; display: flex; align-items: center; }
.hscroll i { width: 199px; height: 2px; margin-left: 259px; background: #888; }

.palette { display: flex; height: 19px; padding-left: 1px; border-bottom: 2px solid #fff; }
.swatches { display: flex; flex: 1; height: 16px; border-top: 1px solid #000; border-left: 1px solid #000; }
.swatches span { flex: 1; }
.swatches svg { flex: 1; min-width: 0; background: #fff; }
.palette button { width: 11px; height: 8px; }
.palette button::before { content: ""; border: 4px solid transparent; border-left: 0; border-right-color: #000; }
.palscroll { display: flex; align-items: center; gap: 6px; height: 15px; padding-left: 5px; }
.palscroll::before { content: ""; border: 4px solid transparent; border-left: 0; border-right: 6px solid #999; }
.palscroll i { width: 112px; height: 1px; background: #888; }

.status { display: flex; align-items: center; height: 26px; padding-left: 2px; line-height: 13px; }
.style { display: grid; grid-template-columns: 70px 55px; font-size: 11px; }
.status label { width: 13px; font-size: 11px; }
.op { width: 48px; }
.layer { display: flex; align-items: center; gap: 8px; margin-left: 3px; padding-left: 6px; height: 25px; border-left: 1px solid #aaa; }
.layer .pick { width: 67px; height: 25px; margin-left: -4px; font-size: 11px; }
.layer .pick select { padding-left: 8px; }
.layer .pick::before { top: 8px; }
.layer button { width: 12px; }
.msg { flex: 1; min-width: 0; padding-left: 3px; white-space: nowrap; overflow: hidden; line-height: 16px; font-size: 11px; }
.coords { display: grid; grid-template-columns: 12px 49px; height: 25px; padding-left: 3px; border-left: 1px solid #aaa; font: 11px/12px "DejaVu Sans Mono", monospace; }
.coords dt { font: 11px/12px "Open Sans", sans-serif; }
.coords dd { text-align: right; }
.coords + label { margin-left: 8px; }
.zm { width: 56px; color: #111; }
.zm input { background: #fff; padding-left: 6px; font-size: 11px; }
```
FILE: app.js
```js
const NS = "http://www.w3.org/2000/svg";

// Icon strips: "|" is a separator, a leading "*" marks a pressed toggle.
document.querySelectorAll("[data-icons]").forEach(strip => {
  strip.innerHTML = strip.dataset.icons.trim().split(/\s+/).map(name => {
    if (name === "|") return "<hr>";
    const on = name.startsWith("*");
    const id = name.replace("*", "");
    return `<button aria-label="${id}"${on ? ' class="on"' : ""}><svg><use href="#i-${id}"/></svg></button>`;
  }).join("");
});

const colors = ("000000 1a1a1a 333333 4d4d4d 666666 808080 999999 b3b3b3 cccccc e6e6e6 ececec f2f2f2 f9f9f9 ffffff " +
  "800000 ff0000 808000 ffff00 008000 00ff00 008080 00ffff 000080 0000ff 800080 ff00ff " +
  "2b0000 550000 800000 aa0000 d40000 ff0000 ff2a2a ff5555 ff8080 ffaaaa ffd5d5 " +
  "280b0b 501616 782121 a02c2c c83737 d35f5f de8787 e9afaf f4d7d7 " +
  "241c1c 483737 6c5353 916f6f ac9393 c8b7b7 e3dbdb 2b1100 552200 803300 aa4400 d45500 ff6600").split(" ");
document.querySelector(".swatches").innerHTML =
  '<svg viewBox="0 0 14 15" preserveAspectRatio="none"><path d="M1 1l12 13M13 1L1 14" stroke="#7a1010" stroke-width="1.500"/></svg>' +
  colors.map(c => `<span style="background:#${c}"></span>`).join("");

// Column guide dots of the statement.
const dots = document.querySelector(".dots");
const rows = [250, 268, 286, 304, 321, 340, 358, 375, 393, 411, 430, 448, 466, 484, 503, 521, 539];
const extra = { 432: [], 525: [224, 562], 618: [562] };
for (const x in extra) {
  rows.concat(extra[x]).forEach(y => {
    const r = document.createElementNS(NS, "rect");
    r.setAttribute("x", x);
    r.setAttribute("y", y);
    r.setAttribute("width", 2);
    r.setAttribute("height", 2);
    r.setAttribute("fill", "#4a1418");
    dots.appendChild(r);
  });
}
```
